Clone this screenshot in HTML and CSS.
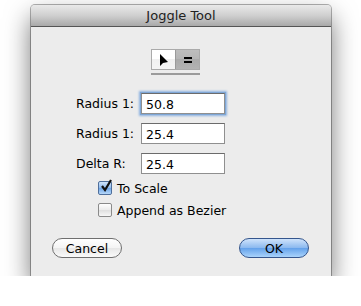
FILE: index.html
```html
<!DOCTYPE html>
<html lang="en">
<head>
    <meta charset="UTF-8">
    <title>Joggle Tool</title>
    <link rel="stylesheet" href="styles.css">
</head>
<body>
    <div class="window">
        <div class="titlebar">Joggle Tool</div>

        <div class="content">
            <div class="segmented">
                <div class="seg seg-left">
                    <svg width="10" height="14" viewBox="0 0 10 14">
                        <path d="M1 1 L1 13 L4 10 L9 9 Z" fill="#000"/>
                    </svg>
                </div>
                <div class="seg seg-right">
                    <svg width="10" height="8" viewBox="0 0 10 8">
                        <rect x="1" y="1" width="8" height="2" fill="#000"/>
                        <rect x="1" y="5" width="8" height="2" fill="#000"/>
                    </svg>
                </div>
            </div>
            <div class="seg-line"></div>

            <div class="fields">
                <label for="r1">Radius 1:</label>
                <input type="text" id="r1" class="field focused" value="50.8">
                <label for="r2">Radius 1:</label>
                <input type="text" id="r2" class="field" value="25.4">
                <label for="dr">Delta R:</label>
                <input type="text" id="dr" class="field" value="25.4">
            </div>

            <div class="checks">
                <div class="check-row">
                    <span class="box checked">
                        <svg width="14" height="14" viewBox="0 0 14 14">
                            <path d="M3 7 L6 11 L12 1" fill="none" stroke="#111" stroke-width="2.2"/>
                        </svg>
                    </span>
                    <span>To Scale</span>
                </div>
                <div class="check-row">
                    <span class="box"></span>
                    <span>Append as Bezier</span>
                </div>
            </div>

            <div class="buttons">
                <button class="btn">Cancel</button>
                <button class="btn btn-default">OK</button>
            </div>
        </div>
    </div>
</body>
</html>
```

FILE: styles.css
```css
body {
    margin: 0;
    background: #fff;
    font-family: "DejaVu Sans", sans-serif;
    font-size: 12px;
    color: #000;
}
.window {
    width: 300px;
    height: 271px;
    margin: 5px 0 0 31px;
    background: #ececec;
    border-radius: 4px 4px 0 0;
    box-shadow: 0 12px 26px rgba(0,0,0,0.55), 0 0 0 1px rgba(0,0,0,0.3);
    display: flex;
    flex-direction: column;
    overflow: hidden;
}
.titlebar {
    height: 21px;
    line-height: 21px;
    text-align: center;
    font-size: 13px;
    color: #222;
    background: linear-gradient(#e9e9e9, #cfcfcf 50%, #a9a9a9);
    border-bottom: 1px solid #555;
    flex: none;
}
.content {
    flex: 1;
    padding-top: 22px;
}
.segmented {
    display: flex;
    width: 47px;
    height: 19px;
    margin-left: 120px;
    border: 1px solid #aaa;
}
.seg {
    flex: 1;
    display: flex;
    align-items: center;
    justify-content: center;
}
.seg-left {
    background: linear-gradient(#fff, #fff 50%, #f0f0f0 50%, #f4f4f4);
    border-right: 1px solid #9a9a9a;
}
.seg-right {
    background: linear-gradient(#bdbdbd, #b5b5b5 50%, #aaaaaa 50%, #b3b3b3);
}
.seg-line {
    width: 49px;
    height: 2px;
    margin: 3px 0 0 120px;
    background: #9b9b9b;
}
.fields {
    display: grid;
    grid-template-columns: 65px 84px;
    row-gap: 9px;
    align-items: center;
    margin: 18px 0 0 45px;
}
.fields label {
    font-size: 12.5px;
}
.field {
    box-sizing: border-box;
    width: 84px;
    height: 21px;
    padding: 1px 4px 0;
    font-family: "DejaVu Sans", sans-serif;
    font-size: 12.5px;
    border: 1px solid #8f8f8f;
    border-top-color: #6b6b6b;
    background: #fff;
    outline: none;
}
.field.focused {
    box-shadow: 0 0 0 1px #7fa7d6, 0 0 2px 2px #8db2e0;
}
.checks {
    margin: 7px 0 0 67px;
    display: flex;
    flex-direction: column;
    gap: 8px;
}
.check-row {
    display: flex;
    align-items: center;
    gap: 5px;
    font-size: 12.5px;
    height: 14px;
}
.box {
    box-sizing: border-box;
    width: 14px;
    height: 14px;
    border: 1px solid #8a8a8a;
    border-radius: 2px;
    background: linear-gradient(#fff, #ececec 50%, #dedede 50%, #f7f7f7);
    position: relative;
}
.box.checked {
    border-color: #4f6f9c;
    background: linear-gradient(#cfe4fa, #8fbbee 50%, #6aa3e6 50%, #b7d8fa);
}
.box svg {
    position: absolute;
    left: 0;
    top: -3px;
}
.buttons {
    display: flex;
    justify-content: space-between;
    margin: 21px 22px 0 21px;
}
.btn {
    width: 70px;
    height: 20px;
    padding: 0;
    font-family: "DejaVu Sans", sans-serif;
    font-size: 12.5px;
    border: 1px solid #6f6f6f;
    border-radius: 10px;
    background: linear-gradient(#fff, #f4f4f4 50%, #e6e6e6 50%, #fafafa);
    color: #000;
}
.btn-default {
    border-color: #35568d;
    background: linear-gradient(#cfe3fb, #8ab8ef 50%, #62a0ea 50%, #a9d3fb);
}
```
